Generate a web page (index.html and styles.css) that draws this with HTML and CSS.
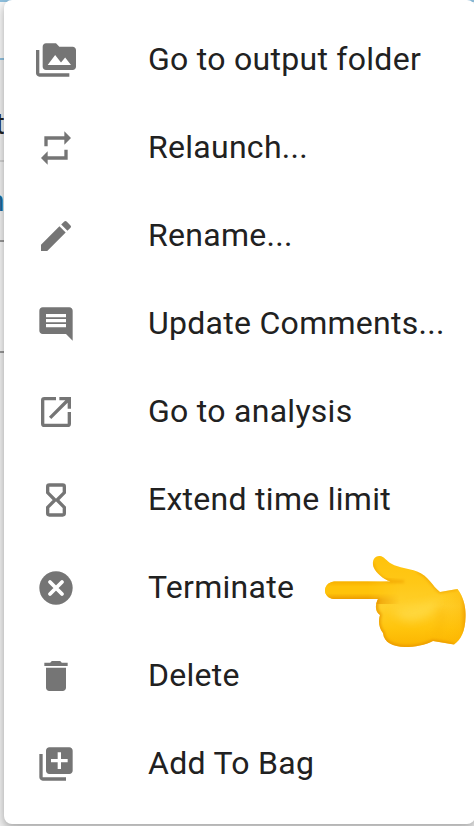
FILE: index.html
```html
<!DOCTYPE html>
<html lang="en">
<head>
<meta charset="utf-8">
<title>Analysis actions</title>
<link rel="stylesheet" href="styles.css">
</head>
<body>
<div class="page">
  <div class="backdrop">
    <div class="band band-top"></div>
    <div class="band band-head"></div>
    <div class="band band-row"><span class="peek peek-dark">t</span></div>
    <div class="band band-link"><span class="peek peek-blue">n</span></div>
    <div class="band band-card"></div>
  </div>
  <ul class="menu">
    <li class="item"><svg class="icon" viewBox="0 0 24 24"><path d="M2 6H0v14c0 1.1.9 2 2 2h18v-2H2V6zm20-2h-8l-2-2H6c-1.1 0-2 .9-2 2v12c0 1.1.9 2 2 2h16c1.1 0 2-.9 2-2V6c0-1.1-.9-2-2-2zM7 15l4.5-6 3.5 4.51 2.5-3.01L21 15H7z"/></svg><span class="label">Go to output folder</span></li>
    <li class="item"><svg class="icon" viewBox="0 0 24 24"><path d="M7 7h10v3l4-4-4-4v3H5v6h2V7zm10 10H7v-3l-4 4 4 4v-3h12v-6h-2v4z"/></svg><span class="label">Relaunch...</span></li>
    <li class="item"><svg class="icon" viewBox="0 0 24 24"><path d="M3 17.25V21h3.75L17.81 9.94l-3.75-3.75L3 17.25zM20.71 7.04a1 1 0 0 0 0-1.41l-2.34-2.34a1 1 0 0 0-1.41 0l-1.83 1.83 3.75 3.75 1.83-1.83z"/></svg><span class="label">Rename...</span></li>
    <li class="item"><svg class="icon" viewBox="0 0 24 24"><path d="M22 4c0-1.1-.9-2-2-2H4c-1.1 0-2 .9-2 2v12c0 1.1.9 2 2 2h14l4 4V4zm-4 10H6v-2h12v2zm0-3H6V9h12v2zm0-3H6V6h12v2z"/></svg><span class="label">Update Comments...</span></li>
    <li class="item"><svg class="icon" viewBox="0 0 24 24"><path d="M12 3H5a2 2 0 0 0-2 2v14a2 2 0 0 0 2 2h14a2 2 0 0 0 2-2v-7h-2v7H5V5h7V3zm2 0v2h3.590l-9.830 9.830 1.410 1.410L19 6.410V10h2V3h-7z"/></svg><span class="label">Go to analysis</span></li>
    <li class="item"><svg class="icon" viewBox="0 0 24 24"><path class="stroke" d="M8 3h8a1 1 0 0 1 1 1v3.600L12.600 12l4.400 4.400V20a1 1 0 0 1-1 1H8a1 1 0 0 1-1-1v-3.600l4.400-4.400L7 7.600V4a1 1 0 0 1 1-1z"/></svg><span class="label">Extend time limit</span></li>
    <li class="item"><svg class="icon" viewBox="0 0 24 24"><circle cx="12" cy="12" r="10"/><path class="cross" d="M8.400 8.400l7.200 7.200M15.600 8.400l-7.200 7.200"/></svg><span class="label">Terminate</span>
      <svg class="hand" viewBox="310 540 164 120">
        <defs>
          <linearGradient id="skin" gradientUnits="userSpaceOnUse" x1="0" y1="556" x2="0" y2="647"><stop offset="0" stop-color="#ffc20a"/><stop offset=".3" stop-color="#ffc817"/><stop offset=".55" stop-color="#ffd02b"/><stop offset=".8" stop-color="#ffc40c"/><stop offset="1" stop-color="#fbb400"/></linearGradient>
          <linearGradient id="finger" gradientUnits="userSpaceOnUse" x1="0" y1="581" x2="0" y2="600"><stop offset="0" stop-color="#f7ae00"/><stop offset=".3" stop-color="#ffc30a"/><stop offset=".65" stop-color="#ffc30a"/><stop offset="1" stop-color="#e99600"/></linearGradient>
          <linearGradient id="fade" gradientUnits="userSpaceOnUse" x1="368" y1="0" x2="400" y2="0"><stop offset="0" stop-color="#fff"/><stop offset="1" stop-color="#000"/></linearGradient>
          <linearGradient id="cuff" x1="0" y1="0" x2="1" y2="0"><stop offset="0" stop-color="#ffb800" stop-opacity="0"/><stop offset=".7" stop-color="#fbb000" stop-opacity=".3"/><stop offset="1" stop-color="#ec9700"/></linearGradient>
          <mask id="fingerMask"><path d="M320 578h84v26h-84z" fill="url(#fade)"/></mask>
          <filter id="soft" filterUnits="userSpaceOnUse" x="310" y="540" width="164" height="120"><feGaussianBlur stdDeviation="1.500"/></filter>
          <filter id="glow" filterUnits="userSpaceOnUse" x="310" y="540" width="164" height="120"><feGaussianBlur stdDeviation="4"/></filter>
          <clipPath id="outline"><path id="shape" d="M334 581.500H390.500C383 579 376 573 373.500 567C371.500 560 375 555.500 380 556C384 556.300 386.500 561 391 563.500C400 568.500 408 568 417 571.500C429 576 432 586 440 592L457.500 589C463.500 597 466 607 465.500 617C465.200 631 461 640 454 644.500L433 641C425 645 415 647 405 647C393 646.500 384 643 383 633C379 628 378 621 380 615C375.500 612 374.500 606 378 599H334C322 598 322 583 334 581.500Z"/></clipPath>
        </defs>
        <use href="#shape" fill="url(#skin)"/>
        <g clip-path="url(#outline)">
          <path d="M320 578h84v26h-84z" fill="url(#finger)" mask="url(#fingerMask)"/>
          <path d="M392 612c14-8 34-4 48-14-8 16-12 20-27 23-12 1-15-7-21-9z" fill="#ffda45" opacity=".8" filter="url(#glow)"/>
          <path d="M435 636c6-8 8-18 7-28" fill="none" stroke="#f8ad00" stroke-width="5" opacity=".5" filter="url(#glow)"/>
          <g filter="url(#soft)">
            <path d="M378 599c-3 7-2 12 2 16-2 6-1 13 3 18 1 10 10 13 22 14 10 0 20-2 28-6l21 3.500" class="shade"/>
            <path d="M373 563c1 10 9 17 18 18.500h13" class="shade crease"/>
            <path d="M417 571c12 5 15 15 23 21l17-3" class="shade crease"/>
          </g>
          <path d="M442 587h25v60h-25z" fill="url(#cuff)"/>
        </g>
      </svg>
    </li>
    <li class="item"><svg class="icon" viewBox="0 0 24 24"><path d="M6 19c0 1.100.9 2 2 2h8c1.100 0 2-.9 2-2V7H6v12zM19 4h-3.500l-1-1h-5l-1 1H5v2h14V4z"/></svg><span class="label">Delete</span></li>
    <li class="item"><svg class="icon" viewBox="0 0 24 24"><path d="M4 6H2v14c0 1.100.9 2 2 2h14v-2H4V6zm16-4H8c-1.100 0-2 .9-2 2v12c0 1.100.9 2 2 2h12c1.100 0 2-.9 2-2V4c0-1.100-.9-2-2-2zm-1 9h-4v4h-2v-4H9V9h4V5h2v4h4v2z"/></svg><span class="label">Add To Bag</span></li>
  </ul>
</div>
</body>
</html>
```
FILE: styles.css
```css
* { box-sizing: border-box; }
body { margin: 0; font-family: Roboto, sans-serif; }
.page { position: relative; width: 474px; height: 826px; overflow: hidden; background: #f0f0f0; }
.backdrop { width: 100%; height: 826px; }
.band { overflow: hidden; }
.band-top { height: 2px; background: #8fc0de; }
.band-head { height: 58px; background: #f8f8f8; border-bottom: 2px solid #8fc0de; }
.band-row { height: 102px; border-bottom: 2px solid #d2d2d2; padding-top: 46px; }
.band-link { height: 80px; border-bottom: 2px solid #999; padding-top: 21px; }
.band-card { height: 111px; border-bottom: 2px solid #999; background: #f5f5f5; }
.peek { display: block; font-size: 30px; line-height: 36px; }
.peek-dark { margin-left: -5px; color: #222; }
.peek-blue { margin-left: -12px; color: #17699c; }
.menu {
  position: absolute;
  top: 0;
  left: 4px;
  width: 471px;
  height: 824px;
  margin: 0;
  padding: 16px 0 0;
  list-style: none;
  background: #fff;
  border-radius: 8px;
  box-shadow: 0 4px 8px rgba(0, 0, 0, .26), 0 2px 16px rgba(0, 0, 0, .08);
}
.item { position: relative; display: flex; align-items: center; height: 88px; padding-left: 32px; }
.icon { flex: none; width: 40px; height: 40px; margin-right: 72px; fill: #757575; }
.stroke { fill: none; stroke: #757575; stroke-width: 2; }
.cross { fill: none; stroke: #fff; stroke-width: 2.3; stroke-linecap: round; }
.label { font-size: 32px; line-height: 40px; letter-spacing: .28px; color: #212121; white-space: nowrap; position: relative; top: -1px; }
.hand { position: absolute; left: 306px; top: -4px; width: 164px; height: 120px; }
.shade { fill: none; stroke: #e99700; stroke-width: 3; }
.crease { stroke: #f0a200; stroke-width: 2; }
```
